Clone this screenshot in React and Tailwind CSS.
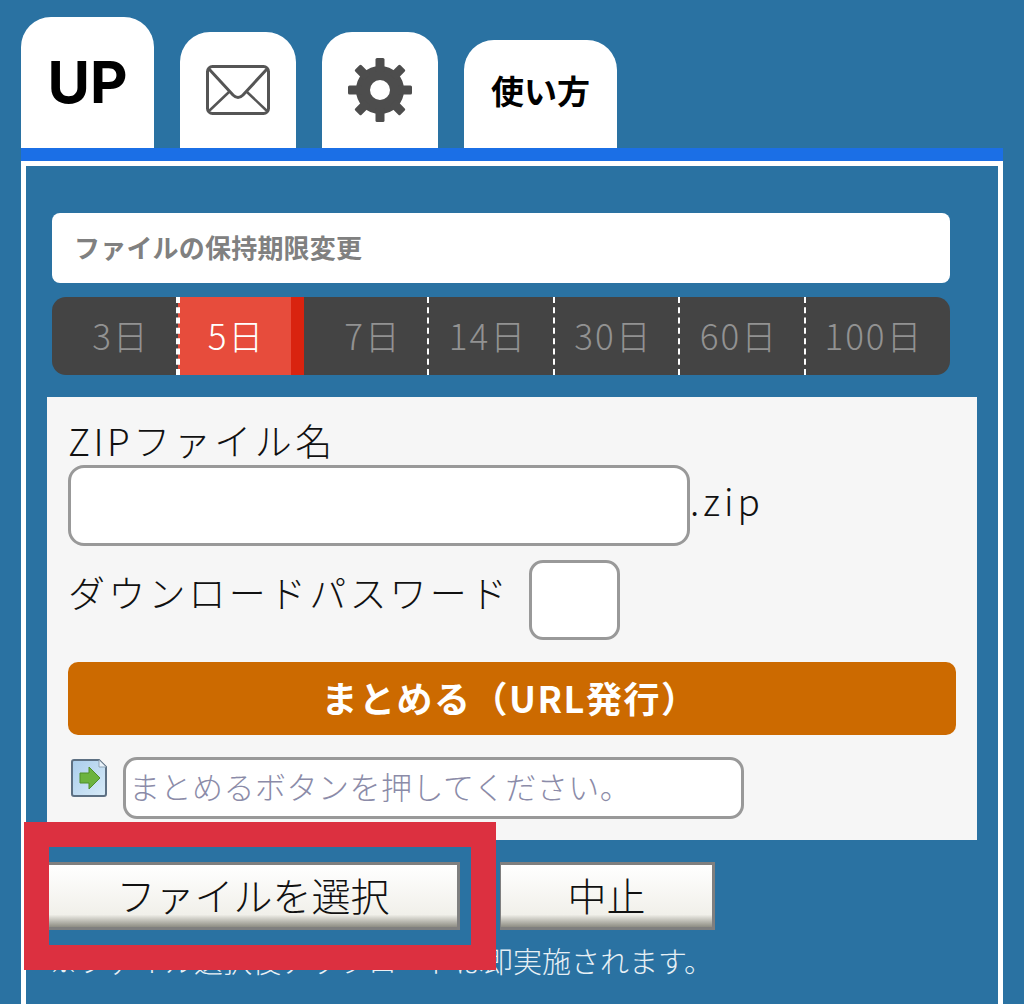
import React from "react";

const jp = "font-['Noto_Sans_CJK_JP','Noto_Sans',sans-serif]";

function MailIcon() {
  return (
    <svg width="64" height="50" viewBox="0 0 64 50" fill="none" stroke="#555" strokeWidth="3">
      <rect x="1.5" y="1.5" width="61" height="47" rx="5" />
      <path d="M3 4 L27 30 Q32 35 37 30 L61 4" />
      <path d="M3 46 L23 27 M61 46 L41 27" strokeWidth="2.5" />
    </svg>
  );
}

function GearIcon() {
  const angles = [0, 45, 90, 135, 180, 225, 270, 315];
  return (
    <svg width="66" height="66" viewBox="-33 -33 66 66" fill="none">
      <circle r="17" stroke="#4d4d4d" strokeWidth="14" />
      {angles.map(a => (
        <rect key={a} x="-4.5" y="-32" width="9" height="14" rx="1.5" fill="#4d4d4d" transform={`rotate(${a})`} />
      ))}
    </svg>
  );
}

function ArrowIcon() {
  return (
    <svg width="38" height="40" viewBox="0 0 38 40" className="shrink-0">
      <defs>
        <linearGradient id="pg" x1="0" y1="0" x2="1" y2="1">
          <stop offset="0" stopColor="#a9cdec" />
          <stop offset="1" stopColor="#d8ebf8" />
        </linearGradient>
      </defs>
      <path d="M2 4 Q2 2 4 2 H29 L36 9 V36 Q36 38 34 38 H4 Q2 38 2 36 Z" fill="url(#pg)" stroke="#5d7083" strokeWidth="2" />
      <path d="M29 2 V9 H36" fill="#e8f2fa" stroke="#8fa4b6" strokeWidth="1" />
      <path d="M10 15 H19 V9 L30 20 L19 31 V25 H10 Z" fill="#6cb33f" stroke="#4f8f2a" strokeWidth="1" />
    </svg>
  );
}

function Tab({ w, h, children }) {
  return (
    <div className={`${w} ${h} bg-white rounded-t-[30px] flex justify-center`}>
      {children}
    </div>
  );
}

function Day({ label, w, active, last, shift }) {
  if (active) {
    return (
      <div className={`${w} flex`}>
        <div className="flex-1 bg-[#e74c3c] border-l-2 border-dashed border-white text-white text-center leading-[76px] pl-[2px]">{label}</div>
        <div className="w-[13px] bg-[#d9230f]"></div>
      </div>
    );
  }
  return (
    <div className={`${w} ${shift} text-center leading-[76px] text-[#929292] ${last ? "" : "border-r-2 border-dashed border-white"}`}>{label}</div>
  );
}

function FileButton({ w, side, children }) {
  return (
    <button className={`${w} ${side} h-[68px] pb-[5px] text-[39px] font-light text-[#111] border-[3px] border-[#7f7f7f] bg-linear-to-b from-white via-[#f1f0ea] via-80% to-[#8f8e84]`}>
      {children}
    </button>
  );
}

export default function App() {
  return (
    <div className={`relative h-[1004px] overflow-hidden bg-[#2a72a2] ${jp}`}>
      <div className="flex items-end gap-[26px] pl-[21px] h-[148px]">
        <Tab w="w-[133px]" h="h-[131px]">
          <span className="mt-[30px] text-[58px] leading-[70px] font-bold text-black font-['Inter',sans-serif]">UP</span>
        </Tab>
        <Tab w="w-[116px]" h="h-[116px]">
          <div className="mt-[33px]"><MailIcon /></div>
        </Tab>
        <Tab w="w-[116px]" h="h-[116px]">
          <div className="mt-[25px]"><GearIcon /></div>
        </Tab>
        <Tab w="w-[153px]" h="h-[108px]">
          <span className="mt-[27px] text-[33px] leading-[46px] font-bold text-black">使い方</span>
        </Tab>
      </div>

      <div className="ml-[21px] mr-[21px] border-t-[13px] border-[#1b6fe6]">
        <div className="border-[5px] border-white px-[21px] pt-[47px] h-[900px]">
          <div className="ml-[5px] mr-[27px]">
            <div className="h-[70px] bg-white rounded-lg pl-[22px] pb-[3px] flex items-center text-[26px] tracking-[0.2px] font-bold text-[#808080]">
              ファイルの保持期限変更
            </div>
            <div className="mt-[14px] h-[78px] flex bg-[#444] rounded-[14px] overflow-hidden text-[35px] font-light tracking-[2px]">
              <Day label="3日" w="w-[126px]" shift="pl-[14px]" />
              <Day label="5日" w="w-[126px]" active />
              <Day label="7日" w="w-[125px]" shift="pl-[15px]" />
              <Day label="14日" w="w-[126px]" shift="pr-[6px]" />
              <Day label="30日" w="w-[125px]" shift="pr-[6px]" />
              <Day label="60日" w="w-[126px]" shift="pr-[6px]" />
              <Day label="100日" w="flex-1" shift="pr-[8px]" last />
            </div>
          </div>

          <div className="mt-[22px] h-[443px] bg-[#f6f6f6] pl-[21px] pr-[21px] pt-[18px] text-[37px] text-[#111] font-light">
            <div className="leading-[50px] tracking-[3.5px]">ZIPファイル名</div>
            <div className="flex items-center">
              <div className="w-[622px] h-[81px] bg-white border-[3px] border-[#999] rounded-[16px]"></div>
              <span className="tracking-[4px] leading-none mb-[10px]">.zip</span>
            </div>
            <div className="mt-[14px] flex items-center">
              <span className="w-[461px] tracking-[3.2px] mb-[14px] whitespace-nowrap">ダウンロードパスワード</span>
              <div className="w-[91px] h-[80px] bg-white border-[3px] border-[#999] rounded-[14px]"></div>
            </div>
            <div className="mt-[22px] h-[73px] bg-[#cc6a00] rounded-[10px] flex items-center justify-center text-white text-[36px] tracking-[1.5px] font-bold pr-[4px] pb-[3px]">
              まとめる（URL発行）
            </div>
            <div className="mt-[22px] flex items-start">
              <div className="ml-[2px] mt-[1px]"><ArrowIcon /></div>
              <div className="ml-[15px] w-[621px] h-[62px] bg-white border-[3px] border-[#999] rounded-[14px] pl-[3px] pb-[3px] flex items-center text-[31px] tracking-[0.5px] whitespace-nowrap text-[#8b8ba8]">
                まとめるボタンを押してください。
              </div>
            </div>
          </div>

          <div className="mt-[22px] ml-[2px] flex gap-[40px]">
            <FileButton w="w-[411px]" side="border-l-0">ファイルを選択</FileButton>
            <FileButton w="w-[215px]" side="border-l">中止</FileButton>
          </div>
          <p className="mt-[12px] pl-[2px] text-[29px] leading-[36px] text-[#e8f0f5] font-light whitespace-nowrap">※ファイル選択後アップロードは即実施されます。</p>
        </div>
      </div>

      <div className="absolute left-[24px] top-[822px] w-[472px] h-[148px] border-[25px] border-[#dc3040]"></div>
    </div>
  );
}
